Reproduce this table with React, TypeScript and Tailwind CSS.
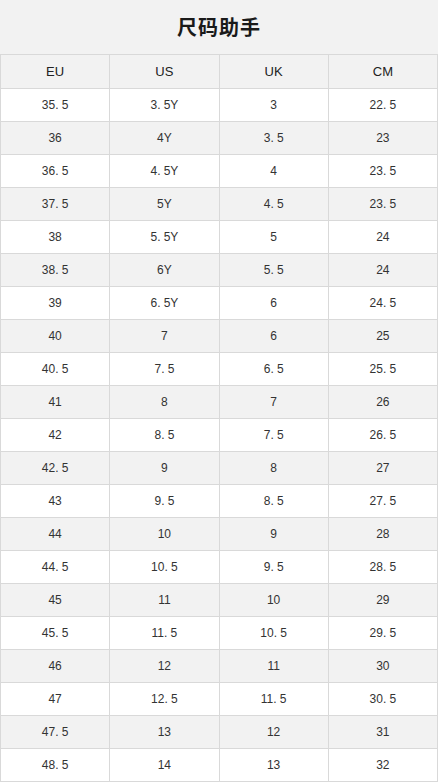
import React from 'react'

const rows: string[][] = [
  ['35.5', '3.5Y', '3', '22.5'],
  ['36', '4Y', '3.5', '23'],
  ['36.5', '4.5Y', '4', '23.5'],
  ['37.5', '5Y', '4.5', '23.5'],
  ['38', '5.5Y', '5', '24'],
  ['38.5', '6Y', '5.5', '24'],
  ['39', '6.5Y', '6', '24.5'],
  ['40', '7', '6', '25'],
  ['40.5', '7.5', '6.5', '25.5'],
  ['41', '8', '7', '26'],
  ['42', '8.5', '7.5', '26.5'],
  ['42.5', '9', '8', '27'],
  ['43', '9.5', '8.5', '27.5'],
  ['44', '10', '9', '28'],
  ['44.5', '10.5', '9.5', '28.5'],
  ['45', '11', '10', '29'],
  ['45.5', '11.5', '10.5', '29.5'],
  ['46', '12', '11', '30'],
  ['47', '12.5', '11.5', '30.5'],
  ['47.5', '13', '12', '31'],
  ['48.5', '14', '13', '32'],
]

const headers = ['EU', 'US', 'UK', 'CM']

// the source font gives the decimal point a full digit width
const Value = ({ text }: { text: string }) => {
  const parts = text.split('.')
  if (parts.length < 2) return <>{text}</>
  return (
    <>
      {parts[0]}
      <span className="inline-block w-[6.5px]">.</span>
      {parts[1]}
    </>
  )
}

const App = () => {
  return (
    <div className="w-[438px] bg-white" style={{ fontFamily: '"Liberation Sans", "Noto Sans CJK SC", sans-serif' }}>
      <div className="h-[54px] bg-[#f2f2f2] flex items-center justify-center">
        <h1 className="text-[20px] font-bold text-[#1a1a1a] tracking-[1px]" style={{ fontFamily: '"Noto Sans CJK SC", sans-serif' }}>
          尺码助手
        </h1>
      </div>
      <div className="grid grid-cols-4 border-t border-l border-[#d9d9d9] bg-[#f2f2f2]">
        {headers.map((h) => (
          <div key={h} className="h-[34px] flex items-center justify-center border-r border-b border-[#d9d9d9] text-[13px] text-[#222]">
            {h}
          </div>
        ))}
      </div>
      {rows.map((r, i) => (
        <div key={i} className={`grid grid-cols-4 border-l border-[#d9d9d9] ${i % 2 === 1 ? 'bg-[#f2f2f2]' : 'bg-white'}`}>
          {r.map((c, j) => (
            <div key={j} className="h-[33px] flex items-center justify-center border-r border-b border-[#d9d9d9] text-[12px] text-[#333]">
              <span><Value text={c} /></span>
            </div>
          ))}
        </div>
      ))}
    </div>
  )
}

export default App
